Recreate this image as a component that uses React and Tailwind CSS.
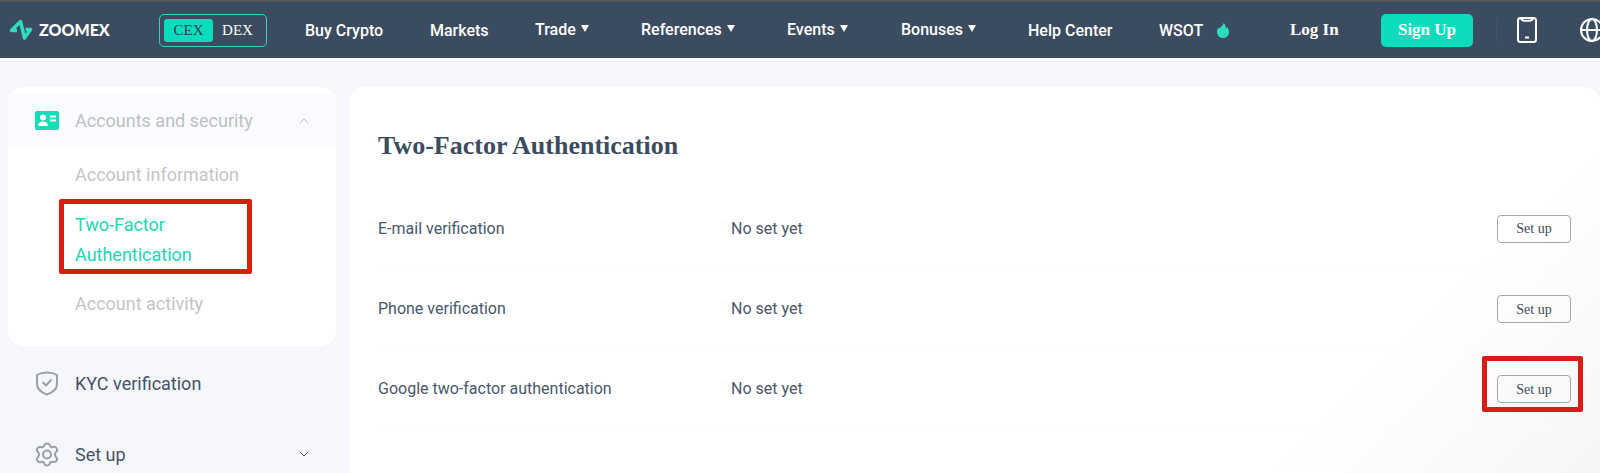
import React, { useState } from 'react';
import { ChevronDown, ChevronUp } from 'lucide-react';

const navLinks = [
  { label: 'Buy Crypto', width: 'w-[125px]' },
  { label: 'Markets', width: 'w-[105px]' },
  { label: 'Trade', width: 'w-[106px]', menu: true },
  { label: 'References', width: 'w-[146px]', menu: true },
  { label: 'Events', width: 'w-[114px]', menu: true },
  { label: 'Bonuses', width: 'w-[127px]', menu: true },
  { label: 'Help Center', width: 'w-[131px]' },
];

const methods = [
  { name: 'E-mail verification', status: 'No set yet' },
  { name: 'Phone verification', status: 'No set yet' },
  { name: 'Google two-factor authentication', status: 'No set yet', highlight: true },
];

const Logo = () => (
  <a href="#" className="w-[150px] shrink-0 flex items-center gap-[6px] text-white">
    <svg width="24" height="22" viewBox="0 0 24 22" fill="none" stroke="#2fdcc0" strokeWidth="3.500" strokeLinejoin="round">
      <path d="M8 11.500H2.500L11.500 2.500 15.500 19 21.500 10.500H16.500" />
    </svg>
    <span className="font-['Lato'] font-black text-[16px] leading-none">ZOOMEX</span>
  </a>
);

const Caret = () => (
  <svg width="8" height="7" viewBox="0 0 8 7" fill="currentColor" className="mb-1">
    <path d="M0 0h8L4 7z" />
  </svg>
);

const Flame = () => (
  <svg width="12" height="15" viewBox="0 0 12 15" className="mb-[2px]">
    <path d="M6.500 0C6.500 2.500 3.500 3 3 5.500 2.300 5.300 2 4.800 2 4.300 .7 5.500 0 7 0 9c0 3.300 2.600 6 6 6s6-2.600 6-6c0-2-.9-3.700-2-5-.2.900-.6 1.300-1.200 1.500C8.800 3.300 8 1.200 6.500 0z" fill="#2adfb9" />
    <path d="M6 13c1.500-.3 2.500-1.500 2.500-3" stroke="#20c3a4" fill="none" />
  </svg>
);

const Phone = () => (
  <svg width="20" height="26" viewBox="0 0 20 26" fill="none" stroke="white" strokeWidth="2">
    <rect x="1" y="1" width="18" height="24" rx="2.500" />
    <path d="M4 1.500c1 2 2 2.200 3 2.200h6c1 0 2-.2 3-2.200M8 20.500h4" strokeWidth="2" />
  </svg>
);

const Globe = () => (
  <svg width="24" height="24" viewBox="0 0 24 24" fill="none" stroke="white" strokeWidth="2">
    <circle cx="12" cy="12" r="11" />
    <ellipse cx="12" cy="12" rx="5" ry="11" />
    <path d="M1 12h22" />
  </svg>
);

const CardIcon = () => (
  <svg width="24" height="19" viewBox="0 0 24 19">
    <rect width="24" height="19" rx="2" fill="#13dcb9" />
    <circle cx="8" cy="6.500" r="3" fill="white" />
    <path d="M3 15c0-3 2-4.500 5-4.500s5 1.500 5 4.500z" fill="white" />
    <path d="M15 5.500h6M15 9.500h6" stroke="white" strokeWidth="2" />
  </svg>
);

const ShieldIcon = () => (
  <svg width="24" height="25" viewBox="0 0 24 25" fill="none" stroke="#9a9fa8" strokeWidth="2" strokeLinejoin="round">
    <path d="M12 1.500C9 1.500 5 2.200 2 4v9c0 5 4.500 8.500 10 10.500C17.500 21.500 22 18 22 13V4c-3-1.800-7-2.500-10-2.500z" />
    <path d="M7.500 11l3.500 3.500 5.500-6" />
  </svg>
);

const GearIcon = () => (
  <svg width="24" height="25" viewBox="0 0 24 25" fill="none" stroke="#9a9fa8" strokeWidth="2" strokeLinejoin="round">
    <path d="M9.200 3.500 Q9.800 1.500 12 1.500 T14.800 3.500 Q15.500 5.800 18 5 Q20.500 4.300 21.700 6.500 T21 10 Q19 12.500 21 15 Q22.800 16.500 21.700 18.500 T18 20 Q15.500 19.200 14.800 21.500 Q14.200 23.500 12 23.500 T9.200 21.500 Q8.500 19.200 6 20 Q3.500 20.700 2.300 18.500 T3 15 Q5 12.500 3 10 Q1.200 8.500 2.300 6.500 T6 5 Q8.500 5.800 9.200 3.500z" />
    <circle cx="12" cy="12.500" r="4" />
  </svg>
);

const Header = () => {
  const [exchange, setExchange] = useState('CEX');

  return (
    <header className="h-[58px] bg-[#3b4c60] border-t-2 border-[#555558] pl-[9px] flex items-center text-white overflow-hidden">
      <Logo />

      <div className="w-[108px] h-[33px] shrink-0 mr-[38px] p-1 flex border border-[#2fd5bd] rounded-[5px] font-['Liberation_Serif'] text-[15px]">
        {['CEX', 'DEX'].map((name) => (
          <button
            key={name}
            onClick={() => setExchange(name)}
            className={
              exchange === name
                ? 'flex-1 rounded-[3px] bg-[#0bdcbc] text-[#24424e]'
                : 'flex-1 rounded-[3px] text-white'
            }
          >
            {name}
          </button>
        ))}
      </div>

      <nav className="flex items-center shrink-0 font-medium text-[16px]">
        {navLinks.map((item) =>
          item.menu ? (
            <button key={item.label} className={`${item.width} flex items-center gap-[5px]`}>
              {item.label}
              <Caret />
            </button>
          ) : (
            <a key={item.label} href="#" className={`${item.width} pt-[2px]`}>
              {item.label}
            </a>
          )
        )}
        <a href="#" className="w-[131px] pt-[2px] flex items-center gap-[14px]">
          WSOT
          <Flame />
        </a>
      </nav>

      <div className="flex items-center shrink-0 font-['Liberation_Serif'] font-bold text-[17px]">
        <a href="#" className="w-[91px]">Log In</a>
        <button className="w-[92px] h-[33px] rounded-[5px] bg-[#0bdcbc]">Sign Up</button>
        <span className="w-px h-6 ml-[23px] mr-[20px] bg-[#435468]"></span>
        <button aria-label="Download app" className="mr-[43px]"><Phone /></button>
        <button aria-label="Language"><Globe /></button>
      </div>
    </header>
  );
};

const Sidebar = () => (
  <aside className="w-[328px] shrink-0 text-[18px] text-[#44546a]">
    <div className="bg-white rounded-2xl pt-[7px] h-[259px]">
      <button className="w-full h-[53px] pl-[27px] pr-[24px] flex items-center gap-4 bg-[#fafbfe] text-[#bdbfc3]">
        <CardIcon />
        Accounts and security
        <ChevronUp size={16} strokeWidth={1.500} className="ml-auto" />
      </button>

      <ul className="text-[#c4c5c8] leading-[30px]">
        <li className="pl-[67px] pt-[13px]">
          <a href="#">Account information</a>
        </li>
        <li className="ml-[51px] mt-[9px] w-[193px] h-[75px] pl-[11px] pt-[6px] border-5 border-[#d5200f] rounded-[2px] text-[#20d8b4]">
          <a href="#" className="block w-[140px]">Two-Factor Authentication</a>
        </li>
        <li className="pl-[67px] pt-[15px]">
          <a href="#">Account activity</a>
        </li>
      </ul>
    </div>

    <a href="#" className="h-[75px] pl-[27px] flex items-center gap-4">
      <ShieldIcon />
      KYC verification
    </a>
    <button className="w-full h-[66px] pl-[27px] pr-[24px] flex items-center gap-4">
      <GearIcon />
      Set up
      <ChevronDown size={16} strokeWidth={1.500} className="ml-auto" />
    </button>
  </aside>
);

const App = () => {
  return (
    <div className="h-screen flex flex-col overflow-hidden bg-[#f6f7fc] font-['Roboto',sans-serif]">
      <Header />
      <div className="h-1 shrink-0 bg-white border-b border-[#eeeff3]"></div>

      <div className="flex-1 min-h-0 pt-[25px] pl-2 flex gap-[13px]">
        <Sidebar />

        <main className="flex-1 rounded-t-2xl pl-[29px] pr-[29px] pt-[41px] bg-linear-135 from-white from-80% to-[#f6f6f7] text-[#4a586b]">
          <h1 className="font-['Liberation_Serif'] font-bold text-[26px] leading-9 text-[#3b4c60]">
            Two-Factor Authentication
          </h1>

          <table className="w-full mt-[25px] text-[16px]">
            <tbody>
              {methods.map((m) => (
                <tr key={m.name} className="h-20 border-b border-[#fcfcfd]">
                  <td className="w-[353px]">{m.name}</td>
                  <td>{m.status}</td>
                  <td className="w-[74px]">
                    <div className="relative">
                      <button className="block w-[74px] h-[28px] border border-[#a0a8b2] rounded-[4px] font-['Liberation_Serif'] text-[14px] text-[#3b4c60]">
                        Set up
                      </button>
                      {m.highlight && (
                        <span className="absolute -left-[15px] -right-[12px] -top-[19px] -bottom-[9px] border-5 border-[#d91c14] rounded-[2px] pointer-events-none"></span>
                      )}
                    </div>
                  </td>
                </tr>
              ))}
            </tbody>
          </table>
        </main>
      </div>
    </div>
  );
};

export default App;
